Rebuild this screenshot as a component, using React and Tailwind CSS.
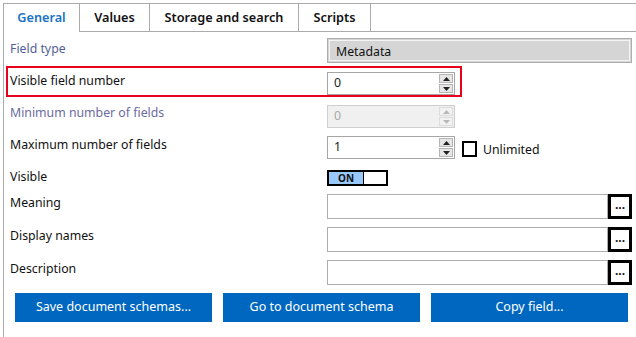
import React from 'react';

const FONT = "font-['Noto_Sans','Open_Sans',sans-serif]";

function Spinner({ disabled }) {
  const arrow = disabled ? 'fill-[#b8b8b8]' : 'fill-[#222]';
  const btn = disabled
    ? 'border-[#dcdcdc] bg-[#f2f2f2]'
    : 'border-[#b5b5b5] bg-[#e6e6e6]';
  return (
    <div className="flex flex-col gap-[1px] pr-[1px]">
      <div className={`w-[14px] h-[9px] border flex items-center justify-center ${btn}`}>
        <svg width="7" height="4" viewBox="0 0 7 4"><path d="M0 4 L3.5 0 L7 4 Z" className={arrow} /></svg>
      </div>
      <div className={`w-[14px] h-[9px] border flex items-center justify-center ${btn}`}>
        <svg width="7" height="4" viewBox="0 0 7 4"><path d="M0 0 L7 0 L3.5 4 Z" className={arrow} /></svg>
      </div>
    </div>
  );
}

function NumberBox({ value, disabled }) {
  return (
    <div className={`w-[128px] h-[23px] border flex items-center justify-between pl-[6px] ${disabled ? 'border-[#cfcfcf] bg-[#f0f0f0] text-[#a8a8a8]' : 'border-[#a5a5a5] bg-white text-[#1c1c1c]'}`}>
      <span>{value}</span>
      <Spinner disabled={disabled} />
    </div>
  );
}

function TextWithDots() {
  return (
    <div className="flex h-[25px]">
      <div className="w-[281px] h-full border border-[#adadad] bg-white"></div>
      <div className="w-[24px] h-full border-[3px] border-black bg-white flex items-center justify-center font-bold text-[12px] leading-none pb-[3px]">...</div>
    </div>
  );
}

export default function App() {
  const tabs = [
    { name: 'General', w: 'w-[76px]', active: true },
    { name: 'Values', w: 'w-[70px]' },
    { name: 'Storage and search', w: 'w-[149px]' },
    { name: 'Scripts', w: 'w-[72px]' },
  ];

  return (
    <div className={`w-[636px] h-[337px] bg-white overflow-hidden text-[12.3px] text-[#111] ${FONT}`}>
      <div className="pt-[3px] pl-[3px] h-full flex flex-col">
        {/* tab strip */}
        <div className="flex h-[29px] shrink-0">
          {tabs.map((t) => (
            <div key={t.name}
              className={`${t.w} h-full border-t border-l border-[#ababab] flex items-center justify-center font-semibold text-[12.7px] ${t.active ? 'text-[#1a73c6] bg-white' : 'border-b text-[#111]'}`}>
              {t.name}
            </div>
          ))}
          <div className="flex-1 h-full border-t border-l border-b border-[#ababab]"></div>
        </div>

        {/* panel */}
        <div className="flex-1 border-l border-[#ababab] flex flex-col">
          <div className="flex items-start h-[25px] mt-[6px] pl-[6px]">
            <div className="w-[317px] mt-[2px] leading-[18px] text-[#51609a]">Field type</div>
            <div className="w-[305px] h-[25px] border border-[#adadad] bg-[#d5d5d5] p-[1px]">
              <div className="h-full border border-[#f4f4f4] flex items-center pl-[6px] pt-[3px]">Metadata</div>
            </div>
          </div>

          <div className="flex items-start h-[31px] mt-[3px] ml-[2px] w-[456px] border-2 border-[#e8001c] pl-[2px] pt-[4px]">
            <div className="w-[317px] mt-[0px] leading-[18px]">Visible field number</div>
            <NumberBox value="0" />
          </div>

          <div className="flex items-start h-[23px] mt-[8px] pl-[6px]">
            <div className="w-[317px] mt-[-1px] leading-[18px] text-[#6a6ca0]">Minimum number of fields</div>
            <NumberBox value="0" disabled />
          </div>

          <div className="flex items-start h-[23px] mt-[8px] pl-[6px]">
            <div className="w-[317px] mt-[0px] leading-[18px]">Maximum number of fields</div>
            <NumberBox value="1" />
            <div className="flex items-center ml-[7px] h-[23px] pt-[3px]">
              <div className="w-[15px] h-[16px] border-2 border-black bg-white"></div>
              <span className="ml-[6px] pt-[2px]">Unlimited</span>
            </div>
          </div>

          <div className="flex items-start h-[16px] mt-[11px] pl-[6px]">
            <div className="w-[317px] mt-[-2px] leading-[18px]">Visible</div>
            <div className="w-[61px] h-[16px] border-2 border-black flex">
              <div className="w-[34px] h-full bg-[#99c9fb] flex items-center justify-center font-bold text-[10px] leading-none">ON</div>
              <div className="flex-1 bg-white border-l border-black"></div>
            </div>
          </div>

          <div className="flex items-start h-[25px] mt-[8px] pl-[6px]">
            <div className="w-[317px] mt-[0px] leading-[18px]">Meaning</div>
            <TextWithDots />
          </div>

          <div className="flex items-start h-[25px] mt-[8px] pl-[6px]">
            <div className="w-[317px] mt-[0px] leading-[18px]">Display names</div>
            <TextWithDots />
          </div>

          <div className="flex items-start h-[25px] mt-[8px] pl-[6px]">
            <div className="w-[317px] mt-[0px] leading-[18px]">Description</div>
            <TextWithDots />
          </div>

          <div className="flex gap-[11px] mt-[8px] pl-[11px]">
            {['Save document schemas...', 'Go to document schema', 'Copy field...'].map((b) => (
              <div key={b} className="w-[197px] h-[29px] bg-[#0067c0] text-white flex items-center justify-center text-[12.5px]">
                {b}
              </div>
            ))}
          </div>
        </div>
      </div>
    </div>
  );
}
